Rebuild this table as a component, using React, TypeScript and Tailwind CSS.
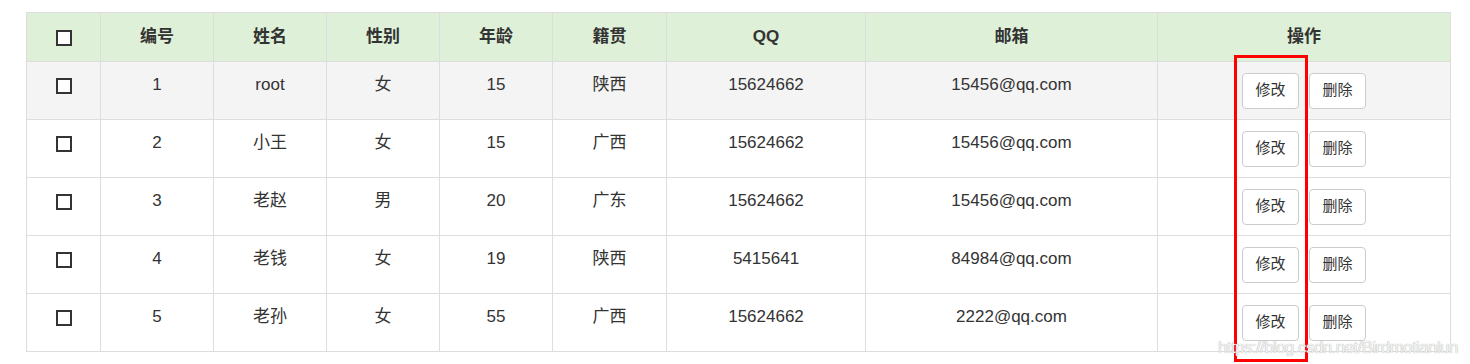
import React from "react";

interface UserRow {
  id: number;
  name: string;
  gender: string;
  age: number;
  address: string;
  qq: string;
  email: string;
}

const users: UserRow[] = [
  { id: 1, name: "root", gender: "女", age: 15, address: "陕西", qq: "15624662", email: "15456@qq.com" },
  { id: 2, name: "小王", gender: "女", age: 15, address: "广西", qq: "15624662", email: "15456@qq.com" },
  { id: 3, name: "老赵", gender: "男", age: 20, address: "广东", qq: "15624662", email: "15456@qq.com" },
  { id: 4, name: "老钱", gender: "女", age: 19, address: "陕西", qq: "5415641", email: "84984@qq.com" },
  { id: 5, name: "老孙", gender: "女", age: 55, address: "广西", qq: "15624662", email: "2222@qq.com" },
];

const font = { fontFamily: '"Liberation Sans", Arial, "Noto Sans CJK SC", sans-serif' };

function Box() {
  return <span className="inline-block w-[16px] h-[16px] border-2 border-[#333] bg-white align-middle" />;
}

function App() {
  const th = "border border-[#ddd] text-center align-middle font-bold";
  const td = "border border-[#ddd] text-center align-top pt-[11px] leading-[24px]";

  return (
    <div className="relative w-[1470px] h-[364px] bg-white text-[#333] text-[17px] overflow-hidden" style={font}>
      <div className="pt-[12px] pl-[26px]">
        <table className="table-fixed border-collapse w-[1425px]">
          <thead>
            <tr className="bg-[#dff0d8] h-[49px]">
              <th className={`${th} w-[74px]`}>
                <Box />
              </th>
              <th className={`${th} w-[113px]`}>编号</th>
              <th className={`${th} w-[113px]`}>姓名</th>
              <th className={`${th} w-[113px]`}>性别</th>
              <th className={`${th} w-[113px]`}>年龄</th>
              <th className={`${th} w-[114px]`}>籍贯</th>
              <th className={`${th} w-[199px]`}>QQ</th>
              <th className={`${th} w-[292px]`}>邮箱</th>
              <th className={`${th} w-[293px]`}>操作</th>
            </tr>
          </thead>
          <tbody>
            {users.map((u, i) => (
              <tr key={u.id} className={`h-[58px] ${i === 0 ? "bg-[#f4f4f4]" : "bg-white"}`}>
                <td className={td}>
                  <Box />
                </td>
                <td className={td}>{u.id}</td>
                <td className={td}>{u.name}</td>
                <td className={td}>{u.gender}</td>
                <td className={td}>{u.age}</td>
                <td className={td}>{u.address}</td>
                <td className={td}>{u.qq}</td>
                <td className={td}>{u.email}</td>
                <td className="border border-[#ddd] align-middle">
                  <div className="flex justify-center gap-[10px]">
                    <button className="w-[57px] h-[36px] bg-white border border-[#ccc] rounded-[4px] text-[15px] text-[#333]">
                      修改
                    </button>
                    <button className="w-[57px] h-[36px] bg-white border border-[#ccc] rounded-[4px] text-[15px] text-[#333]">
                      删除
                    </button>
                  </div>
                </td>
              </tr>
            ))}
          </tbody>
        </table>
      </div>

      {/* red highlight box drawn over the edit buttons */}
      <div className="absolute left-[1234px] top-[55px] w-[74px] h-[307px] border-[3px] border-[#ff0000] pointer-events-none" />

      {/* watermark */}
      <div
        className="absolute left-[1218px] top-[335px] text-[17px] tracking-[-0.6px] text-[#f2f2f2] pointer-events-none"
        style={{ textShadow: "0 0 1px #9a9a9a" }}
      >
        https://blog.csdn.net/Birdmotianlun
      </div>
    </div>
  );
}

export default App;
